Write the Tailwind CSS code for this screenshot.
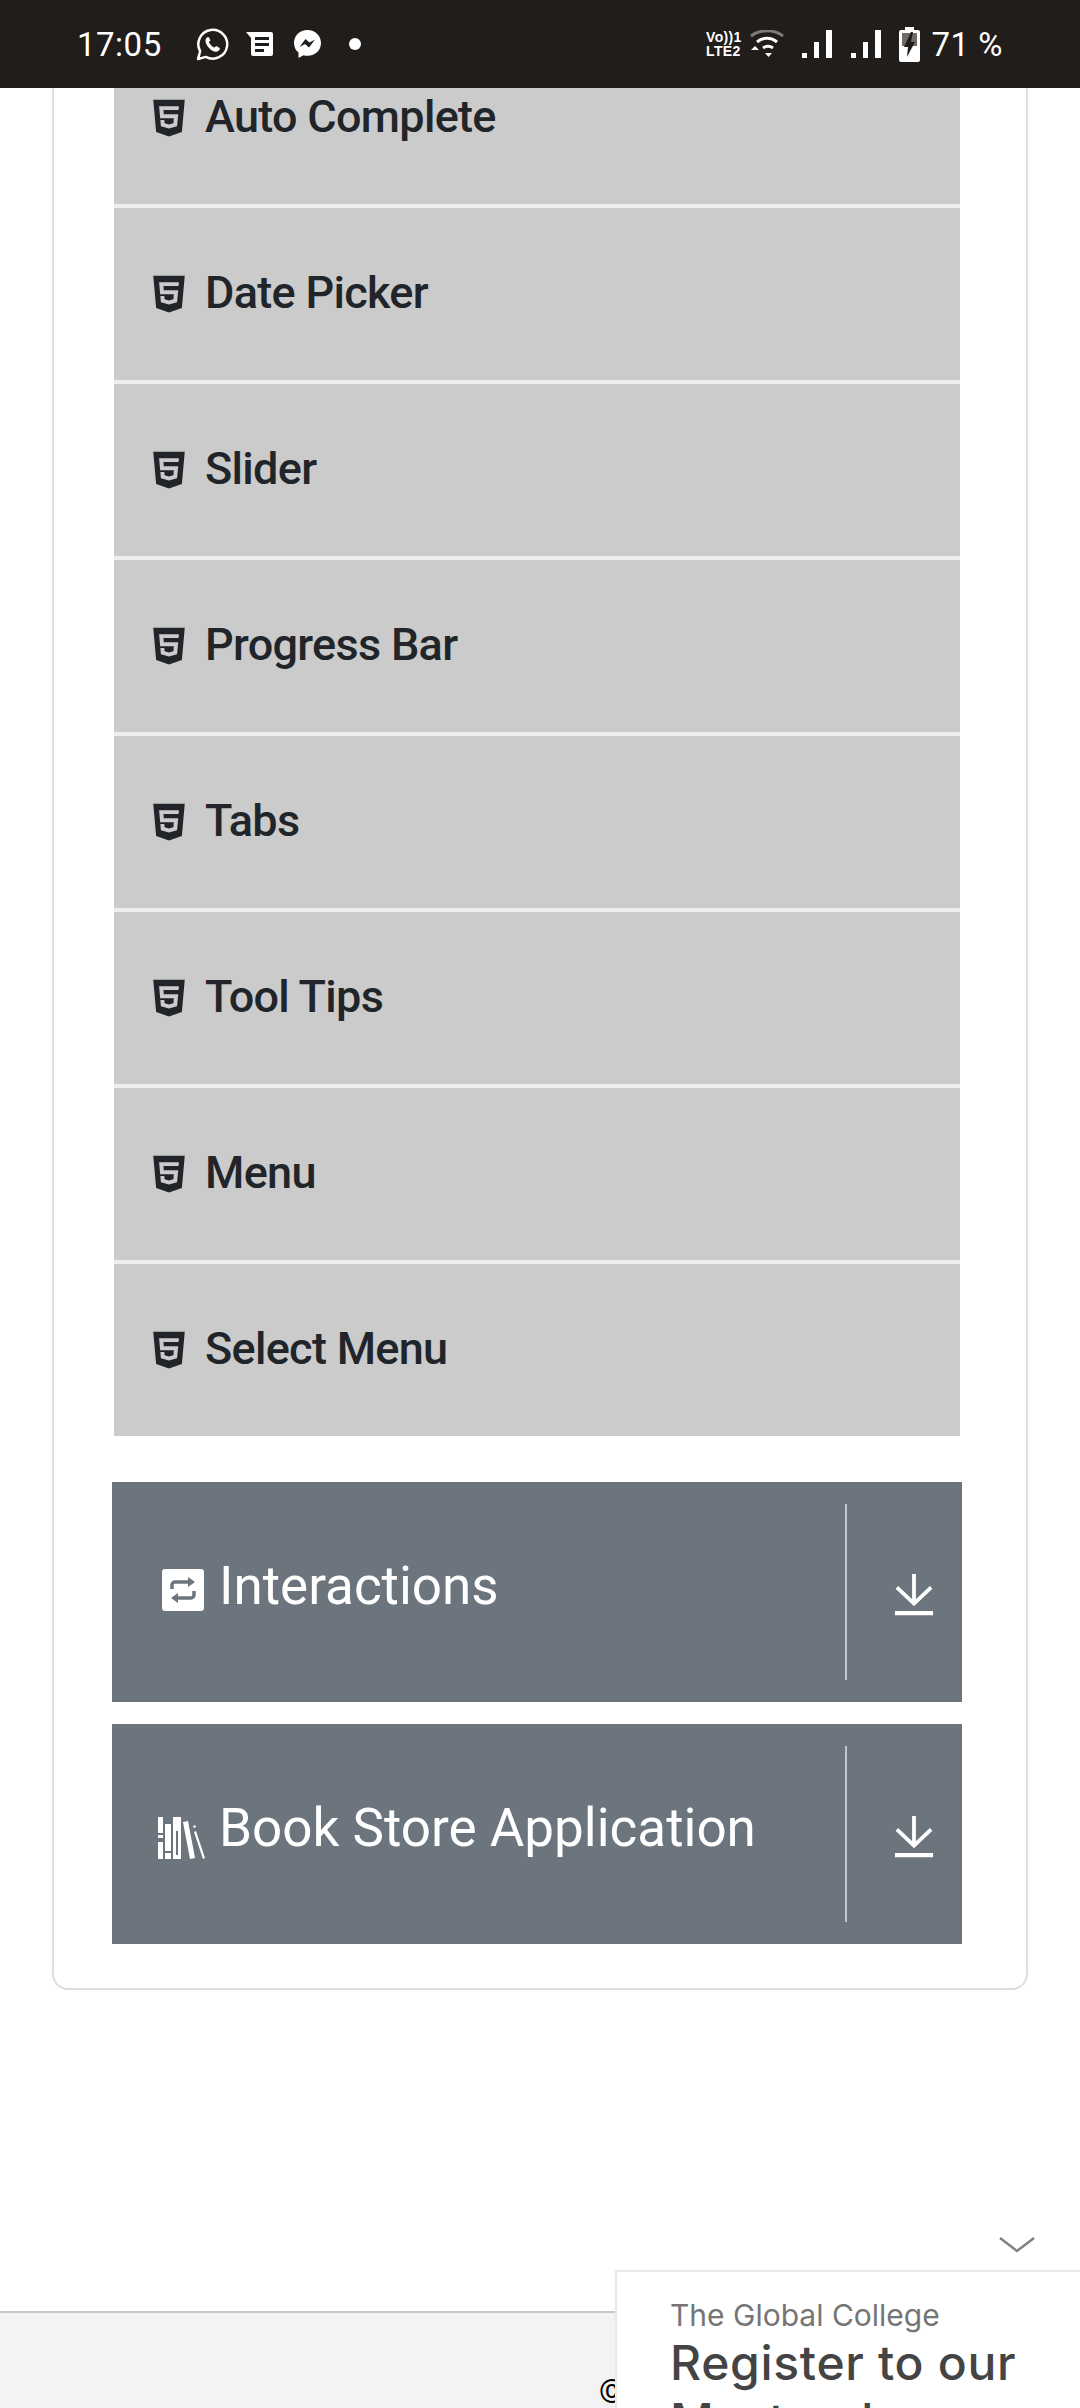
<!DOCTYPE html>
<html lang="en">
<head>
    <meta charset="UTF-8">
    <meta name="viewport" content="width=device-width, initial-scale=1.0">
    <title>Book Store Application</title>
    <script src="https://cdn.jsdelivr.net/npm/@tailwindcss/browser@4"></script>
</head>
<body class="bg-white font-['Roboto',sans-serif]">
<div class="relative w-[1080px] h-[2408px] overflow-hidden bg-white">

    <!-- Status bar -->
    <div class="relative z-10 h-[88px] bg-[#211d1a] flex items-center justify-between pl-[77px] pr-[77px] text-white">
        <div class="flex items-center">
            <span class="text-[33px] leading-none mr-[34px] tracking-[0.5px]">17:05</span>
            <svg class="w-[33px] h-[33px] mr-[17px]" viewBox="0 0 32 32" fill="none"><path d="M2 30l2-7.500A14 14 0 1 1 9.500 28z" stroke="#fff" stroke-width="2.400" stroke-linejoin="round"/><path d="M11 9c-2 1-2.500 4-.5 7.500s6 7 9.500 6.500c2.500-.5 3.500-2.500 3-3.500l-3.500-2-1.500 1.500c-2-.5-4.500-3-5.500-5.500l1.500-1.500L12.500 9z" fill="#fff"/></svg>
            <svg class="w-[28px] h-[26px] mr-[19px]" viewBox="0 0 28 26"><path d="M0 1h25a2 2 0 0 1 2 2v20a2 2 0 0 1-2 2H7a2 2 0 0 1-2-2V7z" fill="#fff"/><path d="M9 6h14v3H9zM9 12h14v3H9zM9 18h9v3H9z" fill="#211d1a"/></svg>
            <svg class="w-[29px] h-[30px] mr-[27px]" viewBox="0 0 29 30"><path d="M14.500 1C6.500 1 1 6.800 1 14c0 4 1.700 7.300 4.500 9.500V29l5-2.800c1.300.4 2.600.6 4 .6 8 0 13.500-5.800 13.500-12.800S22.500 1 14.500 1z" fill="#fff"/><path d="M6.500 18l6-8 4 3.500 5.500-3-6 8-4-3.500z" fill="#211d1a"/></svg>
            <span class="w-[12px] h-[12px] rounded-full bg-white"></span>
        </div>
        <div class="flex items-center">
            <div class="flex flex-col mr-[8px] font-['Liberation_Sans',sans-serif] font-bold text-[14px] leading-[14px] tracking-[0.3px]">
                <span>Vo))1</span>
                <span>LTE2</span>
            </div>
            <svg class="w-[34px] h-[28px] mr-[17px]" viewBox="0 0 34 28" fill="none"><path d="M1 6C10-1 24-1 33 6" stroke="#7d7a78" stroke-width="3"/><path d="M7 12c6-5 14-5 20 0" stroke="#fff" stroke-width="3"/><path d="M13 18c3-2 7-2 10 0" stroke="#fff" stroke-width="3"/><path d="M15 23h7l-3.500 4zM1 20l4-4 4 4z" fill="#fff"/></svg>
            <svg class="w-[32px] h-[28px] mr-[17px]" viewBox="0 0 32 28" fill="#fff"><path d="M1 23h5v5H1zM13 12h5v16h-5zM25 0h6v28h-6z"/></svg>
            <svg class="w-[32px] h-[28px] mr-[17px]" viewBox="0 0 32 28" fill="#fff"><path d="M1 23h5v5H1zM13 12h5v16h-5zM25 0h6v28h-6z"/></svg>
            <svg class="w-[21px] h-[35px] mr-[12px]" viewBox="0 0 21 35"><path d="M6 0h9v3h4a2 2 0 0 1 2 2v28a2 2 0 0 1-2 2H2a2 2 0 0 1-2-2V5a2 2 0 0 1 2-2h4z" fill="#fff"/><path d="M3 6h15v13H3z" fill="#6e6b69"/><path d="M12 5L5 20h4l-1 10 8-15h-4l2-10z" fill="#211d1a"/></svg>
            <span class="text-[33px] leading-none tracking-[0.5px]">71 %</span>
        </div>
    </div>

    <!-- Card -->
    <div class="mx-[52px] -mt-[58px] h-[1960px] border-2 border-[#dedede] rounded-[16px] bg-white pl-[60px] pr-[66px]">
        <ul class="flex flex-col gap-[4px] bg-[#eeeeee] text-[#212529] font-medium text-[45px] leading-none tracking-[-0.7px]">
            <li class="h-[172px] bg-[#cbcbcb] flex items-center pl-[39px] gap-[20px]">
                <svg class="w-[32px] h-[42px] fill-[#212529]" viewBox="0 0 384 512"><path d="M0 32l34.900 395.800L191.500 480l157.600-52.200L384 32H0zm308.200 127.900H124.400l4.100 49.400h175.600l-13.600 148.400-97.900 27v.3h-1.100l-98.700-27.300-6-75.800h47.700L138 320l53.500 14.500 53.700-14.500 6-62.200H84.300L71.500 112.200h241.100l-4.400 47.700z"/></svg>
                <span class="mb-[3px]">Auto Complete</span>
            </li>
            <li class="h-[172px] bg-[#cbcbcb] flex items-center pl-[39px] gap-[20px]">
                <svg class="w-[32px] h-[42px] fill-[#212529]" viewBox="0 0 384 512"><path d="M0 32l34.900 395.800L191.500 480l157.600-52.200L384 32H0zm308.200 127.900H124.400l4.100 49.400h175.600l-13.600 148.400-97.900 27v.3h-1.100l-98.700-27.300-6-75.800h47.700L138 320l53.500 14.500 53.700-14.500 6-62.200H84.300L71.500 112.200h241.100l-4.400 47.700z"/></svg>
                <span class="mb-[3px]">Date Picker</span>
            </li>
            <li class="h-[172px] bg-[#cbcbcb] flex items-center pl-[39px] gap-[20px]">
                <svg class="w-[32px] h-[42px] fill-[#212529]" viewBox="0 0 384 512"><path d="M0 32l34.900 395.800L191.500 480l157.600-52.200L384 32H0zm308.200 127.900H124.400l4.100 49.400h175.600l-13.600 148.400-97.900 27v.3h-1.100l-98.700-27.300-6-75.800h47.700L138 320l53.500 14.500 53.700-14.500 6-62.200H84.300L71.500 112.200h241.100l-4.400 47.700z"/></svg>
                <span class="mb-[3px]">Slider</span>
            </li>
            <li class="h-[172px] bg-[#cbcbcb] flex items-center pl-[39px] gap-[20px]">
                <svg class="w-[32px] h-[42px] fill-[#212529]" viewBox="0 0 384 512"><path d="M0 32l34.900 395.800L191.500 480l157.600-52.200L384 32H0zm308.200 127.900H124.400l4.100 49.400h175.600l-13.600 148.400-97.900 27v.3h-1.100l-98.700-27.300-6-75.800h47.700L138 320l53.500 14.500 53.700-14.500 6-62.200H84.300L71.500 112.200h241.100l-4.400 47.700z"/></svg>
                <span class="mb-[3px]">Progress Bar</span>
            </li>
            <li class="h-[172px] bg-[#cbcbcb] flex items-center pl-[39px] gap-[20px]">
                <svg class="w-[32px] h-[42px] fill-[#212529]" viewBox="0 0 384 512"><path d="M0 32l34.900 395.800L191.500 480l157.600-52.200L384 32H0zm308.200 127.900H124.400l4.100 49.400h175.600l-13.600 148.400-97.900 27v.3h-1.100l-98.700-27.300-6-75.800h47.700L138 320l53.500 14.500 53.700-14.500 6-62.200H84.300L71.500 112.200h241.100l-4.400 47.700z"/></svg>
                <span class="mb-[3px]">Tabs</span>
            </li>
            <li class="h-[172px] bg-[#cbcbcb] flex items-center pl-[39px] gap-[20px]">
                <svg class="w-[32px] h-[42px] fill-[#212529]" viewBox="0 0 384 512"><path d="M0 32l34.900 395.800L191.500 480l157.600-52.200L384 32H0zm308.200 127.900H124.400l4.100 49.400h175.600l-13.600 148.400-97.900 27v.3h-1.100l-98.700-27.300-6-75.800h47.700L138 320l53.500 14.500 53.700-14.500 6-62.200H84.300L71.500 112.200h241.100l-4.400 47.700z"/></svg>
                <span class="mb-[3px]">Tool Tips</span>
            </li>
            <li class="h-[172px] bg-[#cbcbcb] flex items-center pl-[39px] gap-[20px]">
                <svg class="w-[32px] h-[42px] fill-[#212529]" viewBox="0 0 384 512"><path d="M0 32l34.900 395.800L191.500 480l157.600-52.200L384 32H0zm308.200 127.900H124.400l4.100 49.400h175.600l-13.600 148.400-97.900 27v.3h-1.100l-98.700-27.300-6-75.800h47.700L138 320l53.500 14.500 53.700-14.500 6-62.200H84.300L71.500 112.200h241.100l-4.400 47.700z"/></svg>
                <span class="mb-[3px]">Menu</span>
            </li>
            <li class="h-[172px] bg-[#cbcbcb] flex items-center pl-[39px] gap-[20px]">
                <svg class="w-[32px] h-[42px] fill-[#212529]" viewBox="0 0 384 512"><path d="M0 32l34.900 395.800L191.500 480l157.600-52.200L384 32H0zm308.200 127.900H124.400l4.100 49.400h175.600l-13.600 148.400-97.900 27v.3h-1.100l-98.700-27.300-6-75.800h47.700L138 320l53.500 14.500 53.700-14.500 6-62.200H84.300L71.500 112.200h241.100l-4.400 47.700z"/></svg>
                <span class="mb-[3px]">Select Menu</span>
            </li>
        </ul>

        <!-- Collapsed groups -->
        <div class="mt-[46px] -ml-[2px] w-[850px] flex flex-col gap-[22px] text-white text-[53px] leading-none">
            <div class="h-[220px] bg-[#6c757d] flex items-center">
                <div class="flex-1 flex items-center pl-[50px] pb-[11px] gap-[15px]">
                    <svg class="w-[42px] h-[42px] mt-[6px]" viewBox="0 0 42 42"><rect width="42" height="42" rx="3" fill="#fff"/><path d="M10 20v-4a3 3 0 0 1 3-3h14" fill="none" stroke="#6c757d" stroke-width="3.500"/><path d="M26 8l7 5-7 5zM16 24l-7 5 7 5z" fill="#6c757d"/><path d="M32 22v4a3 3 0 0 1-3 3H15" fill="none" stroke="#6c757d" stroke-width="3.500"/></svg>
                    <span>Interactions</span>
                </div>
                <div class="w-[2px] h-[176px] bg-[#c3c6c9]"></div>
                <div class="w-[115px] flex justify-center pl-[18px]">
                    <svg class="w-[40px] h-[42px] mt-[5px]" viewBox="0 0 42 44" fill="none" stroke="#fff" stroke-width="4"><path d="M21 0v31M3 14l18 17 18-17"/><path d="M1 41h40" stroke-width="4.500"/></svg>
                </div>
            </div>
            <div class="h-[220px] bg-[#6c757d] flex items-center">
                <div class="flex-1 flex items-center pl-[45px] pb-[11px] gap-[12px]">
                    <svg class="w-[50px] h-[42px] mt-[18px]" viewBox="0 0 50 42" fill="#fff"><path d="M1 0h5v16H1zM1 18h5v3H1zM1 25h5v17H1z"/><path d="M8 7h6v27H8zM8 36h6v6H8z"/><path d="M16 0h8v42h-8z"/><path d="M26 5l5-1 7 37-5 1z"/><path d="M36 9l2-1 1 2-2 1zM39 14l9 27-2 1-9-27z"/><path d="M19 14h2v24h-2z" fill="#6c757d"/></svg>
                    <span>Book Store Application</span>
                </div>
                <div class="w-[2px] h-[176px] bg-[#c3c6c9]"></div>
                <div class="w-[115px] flex justify-center pl-[18px]">
                    <svg class="w-[40px] h-[42px] mt-[5px]" viewBox="0 0 42 44" fill="none" stroke="#fff" stroke-width="4"><path d="M21 0v31M3 14l18 17 18-17"/><path d="M1 41h40" stroke-width="4.500"/></svg>
                </div>
            </div>
        </div>
    </div>

    <!-- Footer -->
    <footer class="mt-[321px] h-[200px] bg-[#f3f3f3] border-t-2 border-[#c8c8c8]">
        <p class="pt-[62px] pl-[599px] text-[33px] leading-none text-black">©</p>
    </footer>

    <!-- Ad overlay -->
    <svg class="absolute left-[999px] top-[2237px] w-[36px] h-[16px]" viewBox="0 0 36 16" fill="none" stroke="#808080" stroke-width="2.500"><path d="M1 1l17 13L35 1"/></svg>
    <div class="absolute left-[615px] top-[2270px] w-[465px] h-[138px] bg-white border-l-2 border-t-2 border-[#e8e8e8] pl-[53px] pt-[24px] overflow-hidden font-['Inter',sans-serif]">
        <p class="text-[30px] leading-[38px] text-[#757575]">The Global College</p>
        <p class="text-[48px] leading-[58px] font-[450] tracking-[0.7px] text-[#444444]">Register to our Masterclass</p>
    </div>
</div>
</body>
</html>
